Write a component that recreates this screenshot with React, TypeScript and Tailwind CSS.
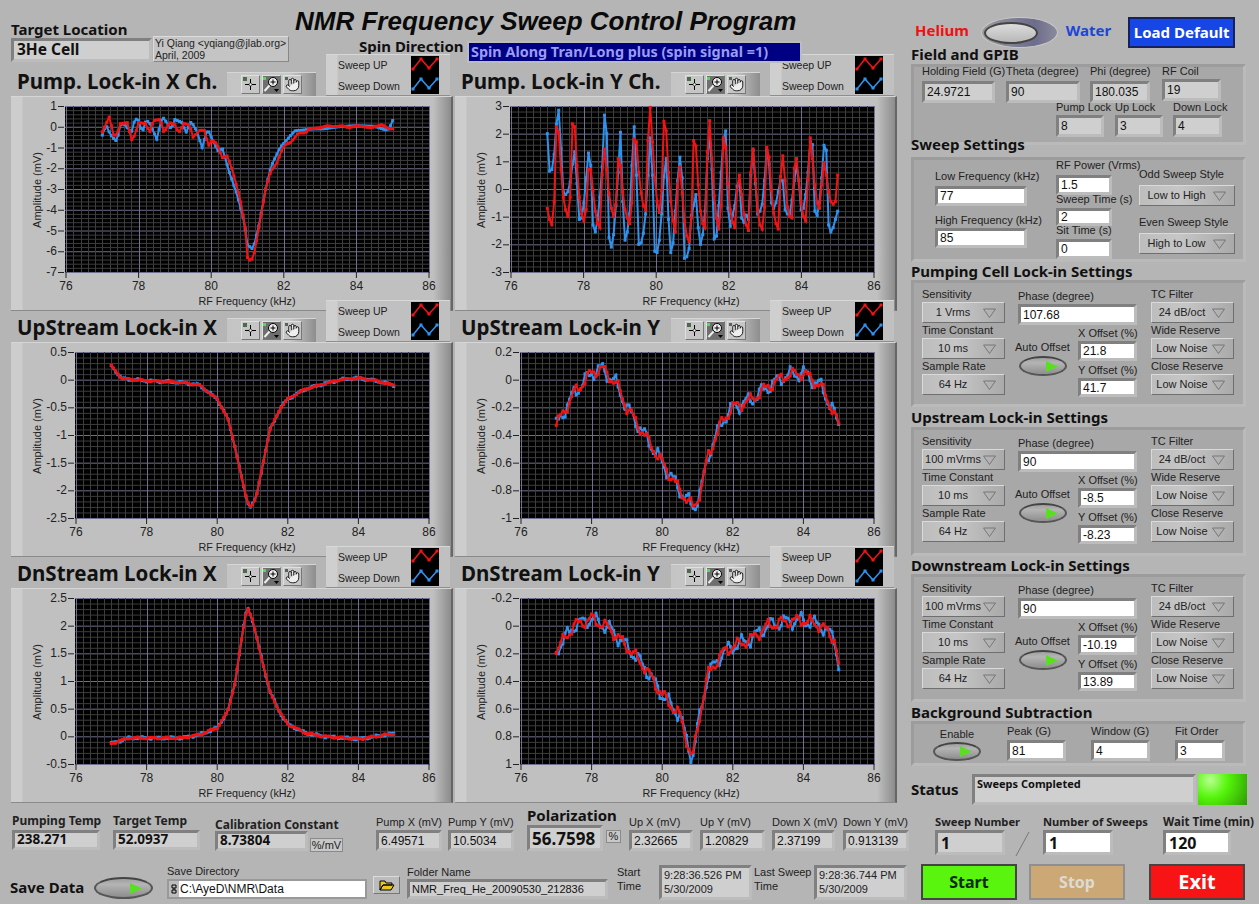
import { Hand } from "lucide-react";
import clsx from "clsx";

// pump Y channel is read straight off the trace, everything else is control points
const pumpYUp = [-.7,-1.1,-1.3,-.45,2.25,2.05,.7,-.3,-.75,-1,-.3,2.35,2.25,.85,-.3,-.9,-1.15,-.75,.7,.7,-.05,-.8,-1.25,-1.4,.5,1.45,.7,-.15,-.7,-1,-.55,1.1,.85,-.1,-.75,-1.05,-1.25,-.5,1.8,1.7,.6,-.15,-.6,-.75,1.75,2.95,1.7,.4,-.45,-.85,-.05,2.45,2.1,.6,-.45,-1.15,-1.55,.1,.8,-.15,-1.15,-1.7,-1.9,-1.05,1.75,1.55,.15,-.8,-1.25,-1.4,1.35,2.47,1.1,-.25,-1.05,-1.45,-.6,1.85,1.5,.2,-.75,-1.2,-1.4,-.05,.5,-.2,-.9,-1.3,-1.5,.6,1.45,.35,-.75,-1.3,-1.45,-.65,1.5,1.15,-.05,-.85,-1.25,-1.45,.45,1.2,.3,-.65,-1,-1.05,.75,1.1,.3,-.5,-1,-1.15,.35,1.85,1.1,.15,-.5,-.7,.15,.95,.5,-.1,-.45,-.55,-.45,.5];
const pumpYDown = [2,.65,.7,1.25,2.35,2.85,1.45,-.1,-.2,-.1,.25,.9,1.35,.2,-1.1,-1.05,-.5,.4,1.3,.85,-1.3,-1.55,-1.1,-.3,.8,2.67,2,-1.75,-2.1,-1.65,-.6,.6,2.05,-.45,-1.85,-1.55,-.9,.85,2.25,.5,-2,-1.95,-1.6,-.9,.5,1.85,.5,-2.25,-2.3,-1.85,-.9,.45,1.1,-1.1,-2.3,-1.95,-.8,.3,1.15,.4,-2.5,-2.45,-2.15,-.95,-.6,-.2,-1.4,-2,-1.65,-.8,1.1,2,.7,-1.8,-1.7,-.6,.6,1.75,2.1,-.7,-1.35,-.95,-.6,.1,.3,-1.05,-1.2,-.95,-1.1,.5,1.4,.2,-.9,-.8,-.55,.3,1.4,.9,-.5,-.7,-.5,-.1,.3,.3,-.75,-.9,-.9,-.4,.3,.85,.3,-.75,-.7,-.2,.6,1.7,1.6,-.8,-.95,-.5,.4,1.58,1.4,-1.3,-1.55,-1.4,-1.1,-.8];

type Pt = [number, number];

const pumpXUp: Pt[] = [[77,-.25],[77.2,.5],[77.3,-.4],[77.4,-.4],[77.5,.15],[77.7,.2],[77.8,-.65],[77.9,-.4],[78,.2],[78.2,.15],[78.3,-.3],[78.4,.3],[78.6,.35],[78.7,-.3],[78.85,.2],[79,.1],[79.1,-.3],[79.25,.15],[79.4,.1],[79.5,-.5],[79.7,-.15],[79.85,-.2],[79.9,-1],[80,-.7],[80.1,-.7],[80.2,-1],[80.3,-1.5],[80.45,-1.4],[80.6,-2.2],[80.8,-3.5],[80.95,-5],[81,-6.3],[81.1,-6.5],[81.2,-6],[81.3,-5],[81.4,-4],[81.5,-3],[81.65,-2.1],[81.8,-1.8],[81.95,-1.1],[82.05,-.85],[82.2,-.75],[82.4,-.3],[82.6,-.3],[82.7,-.1],[83,-.05],[83.2,.05],[83.4,0],[83.6,.05],[83.8,-.05],[84,.05],[84.4,-.05],[84.7,.1],[84.9,-.1],[85,-.1]];
const pumpXDown: Pt[] = [[77,-.4],[77.1,.1],[77.2,-.3],[77.3,-.55],[77.4,-.7],[77.5,.1],[77.6,.15],[77.8,-.3],[77.9,.4],[78,.3],[78.1,-.3],[78.2,.3],[78.3,.2],[78.5,-.6],[78.65,.5],[78.9,-.1],[79,.35],[79.2,.2],[79.3,-.3],[79.45,.25],[79.6,-.2],[79.75,-1],[79.9,-.1],[80,-.5],[80.2,-1.2],[80.3,-1],[80.5,-2.2],[80.7,-3.2],[80.9,-4.5],[81,-5.7],[81.15,-5.9],[81.3,-4.9],[81.5,-3],[81.65,-1.9],[81.9,-1],[82.1,-.6],[82.3,-.2],[82.6,-.15],[82.8,-.1],[83.1,-.1],[83.5,0],[84,.05],[84.5,.02],[84.8,-.15],[84.9,-.1],[85,.3]];
const upX: Pt[] = [[77,.25],[77.3,.02],[78,-.02],[79,-.05],[79.5,-.1],[80,-.35],[80.3,-.7],[80.5,-1.2],[80.7,-1.8],[80.85,-2.2],[80.95,-2.3],[81.1,-2.15],[81.3,-1.5],[81.5,-.9],[81.8,-.5],[82,-.35],[82.5,-.17],[83,-.08],[83.5,0],[84,.03],[84.5,-.02],[85,-.1]];
const dnX: Pt[] = [[77,-.13],[77.5,-.03],[78,-.03],[79,-.03],[79.5,.03],[80,.15],[80.3,.45],[80.5,.95],[80.7,1.8],[80.85,2.35],[81,2.1],[81.3,1.3],[81.5,.8],[81.8,.4],[82,.22],[82.5,.06],[83,0],[84,-.05],[85,.05]];
const upY: Pt[] = [[77,-.33],[77.5,-.1],[78,.05],[78.3,.08],[78.7,-.03],[79,-.2],[79.5,-.4],[80,-.6],[80.5,-.8],[80.9,-.93],[81.1,-.8],[81.3,-.55],[81.7,-.3],[82,-.2],[82.5,-.15],[83,-.05],[83.5,.03],[84,.05],[84.5,-.05],[84.8,-.2],[85,-.33]];
const dnY: Pt[] = [[77,.18],[77.5,0],[78,-.05],[78.5,.02],[79,.15],[79.5,.3],[80,.5],[80.5,.65],[80.85,.97],[81.1,.6],[81.3,.35],[81.7,.2],[82,.15],[82.5,.1],[83,0],[83.5,-.03],[84,-.04],[84.5,0],[84.9,.1],[85,.3]];

const hd = "font-bold [font-family:'Noto_Sans',sans-serif]";

function lerp(pts: Pt[], f: number) {
  for (let i = 1; i < pts.length; i++) {
    if (f <= pts[i][0]) {
      const [a, b] = [pts[i - 1], pts[i]];
      return a[1] + ((f - a[0]) / (b[0] - a[0])) * (b[1] - a[1]);
    }
  }
  return pts[pts.length - 1][1];
}

function trace(pts: Pt[], noise = 0, phase = 0, n = 128): Pt[] {
  return Array.from({ length: n + 1 }, (_, i) => {
    const f = 77 + (8 * i) / n;
    const wob = Math.sin(i * 0.95 + phase) * 0.7 + Math.sin(i * 2.3 + phase * 2) * 0.3;
    return [f, lerp(pts, f) + wob * noise] as Pt;
  });
}

const even = (vals: number[]): Pt[] => vals.map((v, i) => [77 + (8 * i) / (vals.length - 1), v]);

function Chart({ left, w = 365, top, bottom, ticks, up, down }: { left: number; w?: number; top: number; bottom: number; ticks: string[]; up: Pt[]; down: Pt[] }) {
  const h = 166, py = 9;
  const X = (f: number) => left + ((f - 76) / 10) * (w - 2) + 1;
  const Y = (v: number) => py + ((v - top) / (bottom - top)) * h;
  const majorsY = ticks.length - 1;
  const path = (p: Pt[]) => p.map(([f, v]) => `${X(f).toFixed(1)},${Y(v).toFixed(1)}`).join(" ");
  return (
    <svg width="442" height="215" className="absolute inset-0">
      <rect x={left} y={py} width={w} height={h} fill="#000" />
      {Array.from({ length: majorsY * 5 + 1 }, (_, i) => (
        <line key={i} x1={left} x2={left + w} y1={py + (i * h) / (majorsY * 5) + 0.5} y2={py + (i * h) / (majorsY * 5) + 0.5} stroke={i % 5 === 0 ? "#6f6f90" : "#3d3d3d"} />
      ))}
      {Array.from({ length: 51 }, (_, i) => (
        <line key={i} x1={Math.round(X(76 + i * 0.2)) + 0.5} x2={Math.round(X(76 + i * 0.2)) + 0.5} y1={py} y2={py + h} stroke={i % 10 === 0 ? "#6f6f90" : "#3d3d3d"} />
      ))}
      {ticks.map((t, i) => {
        const y = py + (i * h) / majorsY;
        return (
          <g key={t}>
            <line x1={left - 7} x2={left - 1} y1={y + 0.5} y2={y + 0.5} stroke="#222" />
            <text x={left - 8} y={y + 4} textAnchor="end" fontSize="12" fill="#222">{t}</text>
          </g>
        );
      })}
      {[76, 78, 80, 82, 84, 86].map((t) => (
        <g key={t}>
          <line x1={X(t)} x2={X(t)} y1={py + h} y2={py + h + 6} stroke="#222" />
          <text x={X(t)} y={py + h + 18} textAnchor="middle" fontSize="12" fill="#222">{t}</text>
        </g>
      ))}
      <text x={236} y={py + h + 33} textAnchor="middle" fontSize="10.8" fill="#222">RF Frequency (kHz)</text>
      <text transform={`translate(30 ${py + 84}) rotate(-90)`} textAnchor="middle" fontSize="11" fill="#222">Amplitude (mV)</text>
      <polyline points={path(down)} fill="none" stroke="#2f93ee" strokeWidth="2" />
      {down.map(([f, v], i) => <rect key={i} x={X(f) - 1.5} y={Y(v) - 1.5} width="3" height="3" fill="#2f93ee" />)}
      <polyline points={path(up)} fill="none" stroke="#f01414" strokeWidth="2" />
      {up.map(([f, v], i) => <rect key={i} x={X(f) - 1.5} y={Y(v) - 1.5} width="3" height="3" fill="#f01414" />)}
    </svg>
  );
}

function Toolbar() {
  const btn = "w-[19px] h-[19px] flex items-center justify-center border border-t-[#e0e0e0] border-l-[#e0e0e0] border-b-[#777] border-r-[#777]";
  return (
    <div className="mt-[7px] w-[89px] h-[24px] flex items-center gap-[2px] pl-[14px] bg-[linear-gradient(90deg,#c4c4c4,#c8c8c8_70%,#8e8e8e)] border-t border-[#d6d6d6]">
      <div className={clsx(btn, "bg-[#c6c6c6]")}>
        <svg width="17" height="17" viewBox="0 0 17 17">
          <rect x="1" y="1" width="4" height="4" fill="#4b6b4b" />
          <path d="M8.5 3v11M3 8.5h11" stroke="#000" />
          <circle cx="8.5" cy="8.5" r="1.4" fill="#fff" stroke="#000" strokeWidth=".6" />
        </svg>
      </div>
      <div className={clsx(btn, "bg-[#6f6f6f]")}>
        <svg width="17" height="17" viewBox="0 0 17 17">
          <rect x="0" y="1" width="3" height="3" fill="#4fe04f" />
          <circle cx="10" cy="6" r="4.5" fill="#eee" stroke="#000" />
          <path d="M10 3.5v5M7.5 6h5" stroke="#000" />
          <path d="M6.5 9.5 1.5 15" stroke="#eee" strokeWidth="2" />
          <path d="M11 13h5l-2.5 3z" fill="#000" />
        </svg>
      </div>
      <div className={clsx(btn, "relative bg-[#c6c6c6]")}>
        <span className="absolute left-[1px] top-[1px] w-[3px] h-[3px] bg-[#4b6b4b]" />
        <Hand size={15} strokeWidth={1.4} color="#000" fill="#eee" />
      </div>
    </div>
  );
}

function Legend() {
  return (
    <div className="absolute left-[315px] top-[-11px] w-[124px] h-[42px] flex bg-[linear-gradient(90deg,#cfcfcf,#cfcfcf_11px,#c0c0c0_12px)] border-t border-b border-t-[#d8d8d8] border-b-[#8e8e8e]">
      <div className="pl-[12px] w-[85px] text-[10.5px] leading-[21px] text-[#222] whitespace-nowrap">
        <div>Sweep UP</div>
        <div>Sweep Down</div>
      </div>
      <svg width="28" height="38" className="mt-[1px] bg-black" viewBox="0 0 28 38">
        <polyline points="2,13 10,3 18,12 26,3" fill="none" stroke="#f01414" strokeWidth="1.5" />
        <polyline points="2,33 10,23 18,32 26,23" fill="none" stroke="#2f93ee" strokeWidth="1.5" />
        {[[2,13],[10,3],[18,12],[26,3]].map(([x, y]) => <rect key={x} x={x - 1.5} y={y - 1.5} width="3" height="3" fill="#f01414" />)}
        {[[2,33],[10,23],[18,32],[26,23]].map(([x, y]) => <rect key={x} x={x - 1.5} y={y - 1.5} width="3" height="3" fill="#2f93ee" />)}
      </svg>
    </div>
  );
}

function GraphCell({ title, left, chart }: { title: string; left: number; chart: Omit<Parameters<typeof Chart>[0], "left"> }) {
  return (
    <div className="flex flex-col">
      <div className="relative h-[31px] flex">
        <div className={clsx("w-[216px] pl-[6px] text-[20.5px] leading-[33px] text-[#111] whitespace-nowrap", hd)}>{title}</div>
        <Toolbar />
        <Legend />
      </div>
      <div className="relative w-[442px] h-[215px] border-t border-b border-r-2 border-t-[#d6d6d6] border-b-[#8a8a8a] border-r-[#666] bg-[linear-gradient(90deg,#cdcdcd,#cdcdcd_11px,#c0c0c0_12px,#c0c0c0_422px,#8c8c8c)]">
        <Chart left={left} {...chart} />
      </div>
    </div>
  );
}

function Field({ value, className, light, bold }: { value: string; className?: string; light?: boolean; bold?: boolean }) {
  const sized = /text-\[/.test(className ?? "");
  return (
    <div className={clsx("flex items-center px-[2px] border-[3px] border-t-[#808080] border-l-[#808080] border-r-[#bcbcbc] border-b-[#bcbcbc] leading-none text-[#111] whitespace-nowrap overflow-hidden", !sized && "text-[12px]", light ? "bg-white" : "bg-[#cfcfcf]", bold && hd, className)}>
      {value}
    </div>
  );
}

function Label({ children, className }: { children: string; className?: string }) {
  return <div className={clsx("leading-[15px] text-[#222] whitespace-nowrap", className)}>{children}</div>;
}

function Ring({ value, className }: { value: string; className?: string }) {
  return (
    <div className={clsx("h-[21px] flex items-center pr-[8px] text-[#222] whitespace-nowrap border border-t-[#dadada] border-l-[#dadada] border-b-[#6f6f6f] border-r-[#6f6f6f] bg-[linear-gradient(90deg,#bdbdbd,#c6c6c6_40%,#aaaaaa)]", className)}>
      <span className="flex-1 text-center">{value}</span>
      <svg width="13" height="10" viewBox="0 0 13 10"><path d="M.5 1h12L6.5 9.5z" fill="none" stroke="#777" /></svg>
    </div>
  );
}

function Led({ className }: { className?: string }) {
  return (
    <div className={clsx("flex items-center justify-end pr-[6px] rounded-[50%] border-2 border-[#555] border-t-[#444] bg-[linear-gradient(180deg,#a0a0a0,#b4b4b4_30%,#8e8e8e)]", className)}>
      <svg width="14" height="11" viewBox="0 0 14 11"><path d="M1 0l12 5.5L1 11z" fill="#58e020" /></svg>
    </div>
  );
}

function Section({ title, titleClass, boxClass, children }: { title: string; titleClass?: string; boxClass?: string; children: React.ReactNode }) {
  return (
    <>
      <div className={clsx("text-[15px] leading-[18px] text-[#111] whitespace-nowrap", hd, titleClass)}>{title}</div>
      <div className={clsx("w-[335px] border-[3px] border-t-[#9c9c9c] border-l-[#9c9c9c] border-r-[#bababa] border-b-[#bababa] bg-[#a8a8a8]", boxClass)}>{children}</div>
    </>
  );
}

function LockBox({ title, titleClass, boxClass, sens, phase, xo, yo, tc = "10 ms" }: { title: string; titleClass?: string; boxClass: string; sens: string; phase: string; xo: string; yo: string; tc?: string }) {
  const lab = "h-[15px] leading-[12px]";
  return (
    <Section title={title} titleClass={titleClass} boxClass={clsx(boxClass, "flex pl-[8px] pt-[4px]")}>
      <div className="w-[83px] flex flex-col">
        <Label className={lab}>Sensitivity</Label>
        <Ring value={sens} />
        <Label className={lab}>Time Constant</Label>
        <Ring value={tc} />
        <Label className={lab}>Sample Rate</Label>
        <Ring value="64 Hz" />
      </div>
      <div className="ml-[13px] w-[120px] flex flex-col">
        <Label className="mt-[2px]">Phase (degree)</Label>
        <Field value={phase} light className="h-[21px] w-[119px]" />
        <div className="flex">
          <div className="w-[60px] -ml-[3px] mt-[14px]">
            <Label className="leading-[16px]">Auto Offset</Label>
            <Led className="w-[48px] h-[20px] ml-[4px] mt-[1px]" />
          </div>
          <div className="flex flex-col ml-[3px]">
            <Label className="mt-[1px] leading-[14px]">X Offset (%)</Label>
            <Field value={xo} light className="h-[20px] w-[59px]" />
            <Label className="mt-[1px] leading-[16px]">Y Offset (%)</Label>
            <Field value={yo} light className="h-[19px] w-[59px]" />
          </div>
        </div>
      </div>
      <div className="ml-[13px] w-[83px] flex flex-col">
        <Label className={lab}>TC Filter</Label>
        <Ring value="24 dB/oct" />
        <Label className={lab}>Wide Reserve</Label>
        <Ring value="Low Noise" />
        <Label className={lab}>Close Reserve</Label>
        <Ring value="Low Noise" />
      </div>
    </Section>
  );
}

function Stat({ label, value, className, labelClass, fieldClass, bold, light }: { label: string; value: string; className: string; labelClass?: string; fieldClass: string; bold?: boolean; light?: boolean }) {
  return (
    <div className={clsx("flex flex-col", className)}>
      <Label className={labelClass}>{label}</Label>
      <Field value={value} className={fieldClass} bold={bold} light={light} />
    </div>
  );
}

function BigButton({ label, className }: { label: string; className: string }) {
  return (
    <div className={clsx("h-[36px] w-[96px] flex items-center justify-center border-2", hd, className)}>{label}</div>
  );
}

export default function App() {
  return (
    <div className="w-[1259px] h-[904px] overflow-hidden relative flex flex-col bg-[#b5b5b5] text-[11px] [font-family:'Liberation_Sans',sans-serif]">
      <div className="h-[806px] flex">
        {/* graphs */}
        <div className="w-[905px] flex flex-col pl-[11px]">
          <div className="h-[65px] flex">
            <div className="w-[142px] flex flex-col pt-[21px]">
              <div className={clsx("text-[15px] leading-[17px] text-[#111] whitespace-nowrap", hd)}>Target Location</div>
              <Field value="3He Cell" bold className="h-[24px] w-[141px] text-[15.5px] pl-[3px]" />
            </div>
            <div className="mt-[36px] w-[136px] h-[26px] bg-[#c4c4c4] border border-t-[#dcdcdc] border-l-[#dcdcdc] border-b-[#888] border-r-[#888] px-[1px] text-[10.5px] leading-[12px] text-[#222] whitespace-nowrap">
              <div>Yi Qiang &lt;yqiang@jlab.org&gt;</div>
              <div>April, 2009</div>
            </div>
            <div className="ml-[6px] flex flex-col">
              <div className="mt-[6px] text-[26px] leading-[30px] italic font-bold text-[#0a0a0a] whitespace-nowrap">NMR Frequency Sweep Control Program</div>
              <div className={clsx("ml-[64px] mt-[2px] text-[15px] leading-[17px] text-[#111] whitespace-nowrap", hd)}>Spin Direction</div>
            </div>
          </div>
          <div className="grid grid-cols-[444px_444px]">
            <GraphCell title="Pump. Lock-in X Ch." left={54} chart={{ top: 1, bottom: -7, ticks: ["1", "0", "-1", "-2", "-3", "-4", "-5", "-6", "-7"], up: trace(pumpXUp), down: trace(pumpXDown) }} />
            <GraphCell title="Pump. Lock-in Y Ch." left={55} chart={{ top: 3, bottom: -3, ticks: ["3", "2", "1", "0", "-1", "-2", "-3"], up: even(pumpYUp), down: even(pumpYDown) }} />
            <GraphCell title="UpStream Lock-in X" left={64} chart={{ w: 355, top: .5, bottom: -2.5, ticks: ["0.5", "0", "-0.5", "-1", "-1.5", "-2", "-2.5"], up: trace(upX, .015, 1), down: trace(upX, .025, 2.5) }} />
            <GraphCell title="UpStream Lock-in Y" left={65} chart={{ w: 355, top: .2, bottom: -1, ticks: ["0.2", "0", "-0.2", "-0.4", "-0.6", "-0.8", "-1"], up: trace(upY, .05, 0), down: trace(upY, .06, 1.2) }} />
            <GraphCell title="DnStream Lock-in X" left={64} chart={{ w: 355, top: 2.5, bottom: -.5, ticks: ["2.5", "2", "1.5", "1", "0.5", "0", "-0.5"], up: trace(dnX, .02, 3), down: trace(dnX, .025, .7) }} />
            <GraphCell title="DnStream Lock-in Y" left={65} chart={{ w: 355, top: -.2, bottom: 1, ticks: ["-0.2", "0", "0.2", "0.4", "0.6", "0.8", "1"], up: trace(dnY, .05, 2), down: trace(dnY, .06, .2) }} />
          </div>
        </div>

        {/* settings column */}
        <div className="w-[354px] flex flex-col pl-[6px]">
          <div className="h-[47px] pt-[17px] flex items-center shrink-0 box-border">
            <span className={clsx("ml-[4px] -mt-[3px] text-[15px] text-[#f01010]", hd)}>Helium</span>
            <div className="relative ml-[12px] w-[77px] h-[31px] rounded-[50%] bg-[linear-gradient(90deg,#9a9a9a,#6c6c8c_70%,#8a8a9c)] border border-[#c8c8c8]">
              <div className="absolute left-[2px] top-[4px] w-[54px] h-[22px] rounded-[50%] border-2 border-[#444] bg-[linear-gradient(180deg,#dcdcdc,#b8b8b8)]" />
            </div>
            <span className={clsx("ml-[8px] -mt-[3px] text-[15px] text-[#1a47d8]", hd)}>Water</span>
            <div className={clsx("ml-[17px] w-[107px] h-[31px] flex items-center justify-center bg-[#1746e6] border-2 border-[#15215e] text-[15px] text-white whitespace-nowrap", hd)}>Load Default</div>
          </div>

          <Section title="Field and GPIB" titleClass="-mt-[2px] h-[19px] leading-[15px]" boxClass="h-[81px] px-[8px]">
            <div className="flex">
              <div className="w-[84px] flex flex-col">
                <Label className="-mt-[3px] h-[17px]">Holding Field (G)</Label>
                <Field value="24.9721" className="w-[73px] h-[22px]" />
              </div>
              <div className="w-[84px] flex flex-col">
                <Label className="-mt-[3px] h-[17px]">Theta (degree)</Label>
                <Field value="90" className="w-[74px] h-[22px]" />
              </div>
              <div className="w-[72px] flex flex-col">
                <Label className="-mt-[3px] h-[17px]">Phi (degree)</Label>
                <Field value="180.035" className="w-[60px] h-[22px]" />
              </div>
              <div className="flex flex-col">
                <Label className="-mt-[3px] h-[15px]">RF Coil</Label>
                <Field value="19" className="w-[59px] h-[22px]" />
              </div>
            </div>
            <div className="flex -mt-[3px] ml-[134px]">
              <div className="w-[59px] flex flex-col">
                <Label className="h-[15px]">Pump Lock</Label>
                <Field value="8" className="w-[48px] h-[22px]" />
              </div>
              <div className="w-[58px] flex flex-col">
                <Label className="h-[15px]">Up Lock</Label>
                <Field value="3" className="w-[48px] h-[22px]" />
              </div>
              <div className="flex flex-col">
                <Label className="h-[15px]">Down Lock</Label>
                <Field value="4" className="w-[49px] h-[22px]" />
              </div>
            </div>
          </Section>

          <Section title="Sweep Settings" titleClass="-mt-[10px] h-[22px]" boxClass="h-[105px] flex">
            <div className="ml-[21px] w-[121px] mt-[9px] flex flex-col">
              <Label>Low Frequency (kHz)</Label>
              <Field value="77" light className="w-[92px] h-[20px] mt-[2px]" />
              <Label className="mt-[7px]">High Frequency (kHz)</Label>
              <Field value="85" light className="w-[92px] h-[20px]" />
            </div>
            <div className="w-[83px] flex flex-col">
              <Label className="-mt-[2px]">RF Power (Vrms)</Label>
              <Field value="1.5" light className="w-[56px] h-[20px] mt-[2px]" />
              <Label className="-mt-[3px]">Sweep Time (s)</Label>
              <Field value="2" light className="w-[56px] h-[19px] mt-[1px]" />
              <Label className="-mt-[3px]">Sit Time (s)</Label>
              <Field value="0" light className="w-[56px] h-[20px] mt-[1px]" />
            </div>
            <div className="mt-[7px] flex flex-col">
              <Label>Odd Sweep Style</Label>
              <Ring value="Low to High" className="w-[96px] mt-[3px]" />
              <Label className="mt-[9px]">Even Sweep Style</Label>
              <Ring value="High to Low" className="w-[96px] mt-[3px]" />
            </div>
          </Section>

          <LockBox title="Pumping Cell Lock-in Settings" boxClass="h-[127px]" sens="1 Vrms" phase="107.68" xo="21.8" yo="41.7" />
          <LockBox title="Upstream Lock-in Settings" titleClass="mt-[1px] h-[19px]" boxClass="h-[129px]" sens="100 mVrms" phase="90" xo="-8.5" yo="-8.23" />
          <LockBox title="Downstream Lock-in Settings" boxClass="h-[128px]" sens="100 mVrms" phase="90" xo="-10.19" yo="13.89" />

          <Section title="Background Subtraction" titleClass="mt-[1px]" boxClass="h-[45px] flex">
            <div className="ml-[19px] w-[48px] flex flex-col items-center mt-[3px]">
              <Label>Enable</Label>
              <Led className="w-[48px] h-[19px] shrink-0" />
            </div>
            <div className="ml-[26px] w-[84px] flex flex-col">
              <Label className="h-[16px]">Peak (G)</Label>
              <Field value="81" light className="w-[59px] h-[21px]" />
            </div>
            <div className="w-[84px] flex flex-col">
              <Label className="h-[16px]">Window (G)</Label>
              <Field value="4" light className="w-[59px] h-[21px]" />
            </div>
            <div className="flex flex-col">
              <Label className="h-[16px]">Fit Order</Label>
              <Field value="3" light className="w-[50px] h-[21px]" />
            </div>
          </Section>

          <div className="mt-[8px] flex items-center">
            <div className={clsx("w-[61px] text-[15px] text-[#111]", hd)}>Status</div>
            <div className={clsx("w-[224px] h-[31px] px-[2px] border-[3px] border-t-[#808080] border-l-[#808080] border-r-[#bcbcbc] border-b-[#bcbcbc] bg-[#cfcfcf] text-[11px] leading-[13px] text-[#111]", hd)}>Sweeps Completed</div>
            <div className="ml-[2px] w-[49px] h-[31px] bg-[radial-gradient(circle_at_25%_20%,#b8ff90,#55f50a_40%,#2e9a05)]" />
          </div>
        </div>
      </div>

      {/* readouts */}
      <div className="h-[48px] flex pl-[12px] items-start">
        <Stat label="Pumping Temp" value="238.271" bold className="w-[88px] mt-[7px]" labelClass={clsx("h-[17px] text-[12px]", hd)} fieldClass="h-[20px] w-[88px] text-[13.5px]" />
        <Stat label="Target Temp" value="52.0937" bold className="ml-[13px] w-[87px] mt-[7px]" labelClass={clsx("h-[17px] text-[12px]", hd)} fieldClass="h-[20px] w-[87px] text-[13.5px]" />
        <div className="ml-[15px] w-[128px] mt-[11px] flex flex-col">
          <Label className={clsx("h-[14px] text-[12px]", hd)}>Calibration Constant</Label>
          <div className="flex items-start">
            <Field value="8.73804" bold className="h-[20px] w-[93px] text-[13.5px]" />
            <div className="ml-[2px] mt-[7px] w-[33px] h-[14px] flex items-center justify-center bg-[#c8c8c8] border border-[#8a8a8a] text-[#222]">%/mV</div>
          </div>
        </div>
        <Stat label="Pump X (mV)" value="6.49571" className="ml-[33px] w-[66px] mt-[9px]" labelClass="h-[15px]" fieldClass="h-[21px] w-[66px]" />
        <Stat label="Pump Y (mV)" value="10.5034" className="ml-[6px] w-[66px] mt-[9px]" labelClass="h-[15px]" fieldClass="h-[21px] w-[66px]" />
        <div className="ml-[13px] w-[94px] flex flex-col mt-[1px]">
          <div className={clsx("h-[18px] text-[15px] leading-[16px] text-[#111]", hd)}>Polarization</div>
          <div className="flex items-start">
            <Field value="56.7598" bold className="h-[26px] w-[76px] text-[17px] pl-[2px]" />
            <div className="ml-[3px] mt-[5px] w-[15px] h-[13px] flex items-center justify-center bg-[#c8c8c8] border border-[#8a8a8a] text-[#222]">%</div>
          </div>
        </div>
        <Stat label="Up X (mV)" value="2.32665" className="ml-[8px] w-[64px] mt-[9px]" labelClass="h-[15px]" fieldClass="h-[21px] w-[64px]" />
        <Stat label="Up Y (mV)" value="1.20829" className="ml-[7px] w-[65px] mt-[9px]" labelClass="h-[15px]" fieldClass="h-[21px] w-[65px]" />
        <Stat label="Down X (mV)" value="2.37199" className="ml-[7px] w-[63px] mt-[9px]" labelClass="h-[15px]" fieldClass="h-[21px] w-[63px]" />
        <Stat label="Down Y (mV)" value="0.913139" className="ml-[8px] w-[66px] mt-[9px]" labelClass="h-[15px]" fieldClass="h-[21px] w-[66px]" />
        <Stat label="Sweep Number" value="1" bold className="ml-[26px] w-[70px] mt-[8px]" labelClass={clsx("h-[16px] text-[11.2px]", hd)} fieldClass="h-[25px] w-[70px] text-[16px] pl-[3px]" />
        <svg width="38" height="28" className="mt-[24px] shrink-0"><line x1="11" y1="26" x2="24" y2="2" stroke="#777" /></svg>
        <Stat label="Number of Sweeps" value="1" bold light className="w-[70px] mt-[8px]" labelClass={clsx("h-[16px] text-[11.2px]", hd)} fieldClass="h-[25px] w-[70px] text-[16px] pl-[3px]" />
        <Stat label="Wait Time (min)" value="120" bold light className="ml-[50px] w-[68px] mt-[8px]" labelClass={clsx("h-[16px] text-[11.6px]", hd)} fieldClass="h-[25px] w-[68px] text-[16px] pl-[3px]" />
      </div>

      <div className="h-[50px] flex items-start pl-[10px]">
        <div className={clsx("w-[84px] mt-[24px] text-[15px] leading-[18px] text-[#111] whitespace-nowrap", hd)}>Save Data</div>
        <Led className="w-[59px] h-[22px] mt-[23px] pr-[8px]" />
        <div className="ml-[14px] w-[200px] mt-[10px] flex flex-col">
          <Label className="h-[15px]">Save Directory</Label>
          <div className="h-[20px] flex items-center border-2 border-[#999] bg-white text-[12px] text-[#111] whitespace-nowrap">
            <span className="self-stretch w-[10px] mr-[1px] flex items-center justify-center bg-[#bdbdbd]">
              <svg width="6" height="10" viewBox="0 0 6 10"><path d="M1 1h4v3H1zM1 6h4v3H1zM3 4v2" fill="none" stroke="#000" /></svg>
            </span>
            {"C:\\AyeD\\NMR\\Data"}
          </div>
        </div>
        <div className="ml-[6px] mt-[22px] w-[27px] h-[18px] flex items-center justify-center bg-[#bcbcbc] border border-t-[#dcdcdc] border-l-[#dcdcdc] border-b-[#777] border-r-[#777]">
          <svg width="16" height="12" viewBox="0 0 16 12"><path d="M1 2h5l1 2h6v2H4L1 11zM4 6h11l-3 5H1z" fill="#e8c820" stroke="#000" /></svg>
        </div>
        <Stat label="Folder Name" value="NMR_Freq_He_20090530_212836" className="ml-[7px] w-[201px] mt-[11px]" labelClass="h-[14px]" fieldClass="h-[20px] w-[201px] text-[11px]" />
        <div className="ml-[9px] w-[42px] mt-[11px] leading-[14px] text-[#222]">Start<br />Time</div>
        <div className="w-[93px] h-[35px] mt-[11px] px-[2px] border-[3px] border-t-[#808080] border-l-[#808080] border-r-[#bcbcbc] border-b-[#bcbcbc] bg-[#cfcfcf] leading-[14px] text-[#222] whitespace-nowrap">9:28:36.526 PM<br />5/30/2009</div>
        <div className="ml-[2px] w-[60px] mt-[11px] leading-[14px] text-[#222] whitespace-nowrap">Last Sweep<br />Time</div>
        <div className="w-[93px] h-[35px] mt-[11px] px-[2px] border-[3px] border-t-[#808080] border-l-[#808080] border-r-[#bcbcbc] border-b-[#bcbcbc] bg-[#cfcfcf] leading-[14px] text-[#222] whitespace-nowrap">9:28:36.744 PM<br />5/30/2009</div>
        <BigButton label="Start" className="ml-[14px] mt-[10px] bg-[#59f50e] border-[#444] text-[#062a00] text-[16px]" />
        <BigButton label="Stop" className="ml-[12px] mt-[10px] bg-[#cca876] border-[#8f8f8f] text-[#dedbd3] text-[16px]" />
        <BigButton label="Exit" className="ml-[24px] mt-[10px] bg-[#f81414] border-[#444] text-white text-[20px]" />
      </div>

      {/* ring sits open over the panel, same place as on the front panel */}
      <div className={clsx("absolute left-[467px] top-[41px] w-[335px] h-[22px] flex items-center pl-[2px] bg-[#000082] border-2 border-[#bcbcbc] text-[14.4px] text-[#9a9cf5] whitespace-nowrap", hd)}>
        Spin Along Tran/Long plus (spin signal =1)
      </div>
    </div>
  );
}
